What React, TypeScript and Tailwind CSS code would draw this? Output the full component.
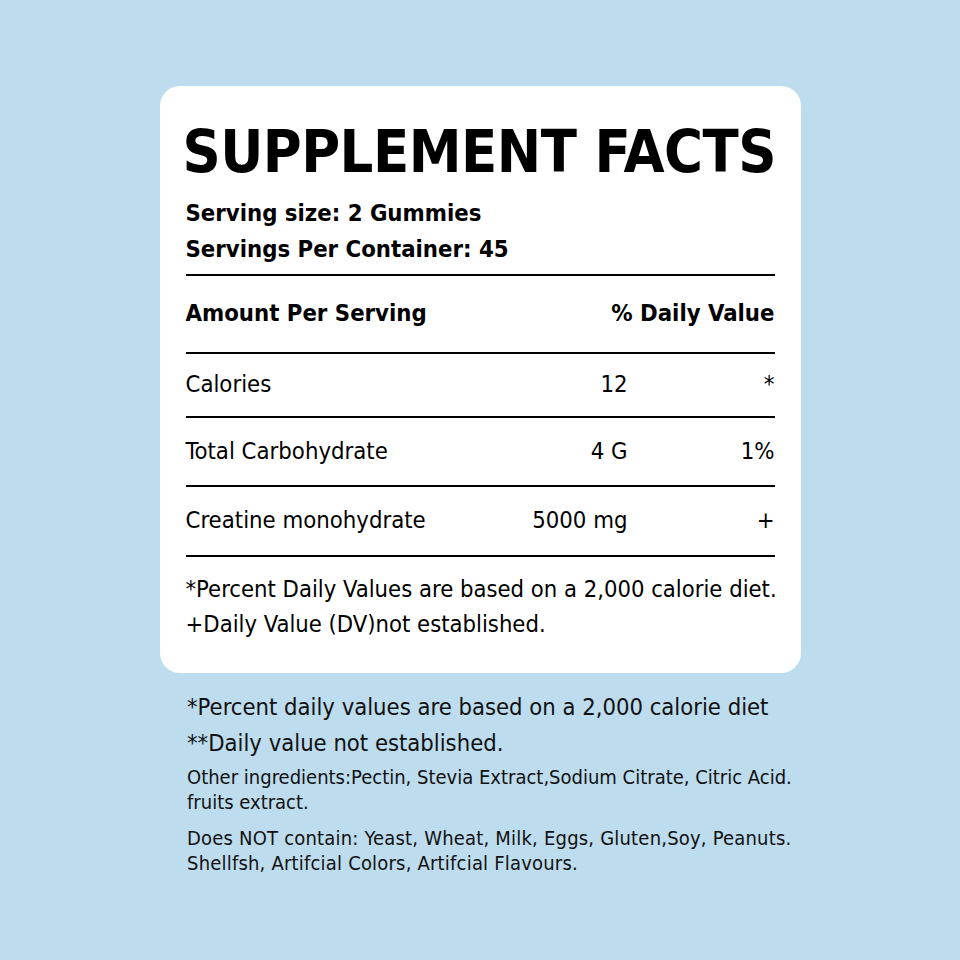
const rows = [
  { name: 'Calories', amount: '12', dv: '*', h: 'h-[64px]' },
  { name: 'Total Carbohydrate', amount: '4 G', dv: '1%', h: 'h-[69px]' },
  { name: 'Creatine monohydrate', amount: '5000 mg', dv: '+', h: 'h-[70px]' },
];

export default function App() {
  return (
    <div
      className="w-[960px] h-[960px] bg-[#bddcee] text-black pt-[86px]"
      style={{ fontFamily: '"DejaVu Sans Condensed", "DejaVu Sans", sans-serif', fontStretch: 'condensed' }}
    >
      <div className="mx-auto w-[641px] h-[587px] rounded-[20px] bg-white px-[26px] pt-[26px]">
        <h1 className="-ml-[3px] text-[59px] leading-[80px] font-bold tracking-[-0.5px] whitespace-nowrap">
          SUPPLEMENT FACTS
        </h1>
        <div className="mt-[3px] text-[23.7px] font-bold leading-[36px]">
          <p>Serving size: 2 Gummies</p>
          <p>Servings Per Container: 45</p>
        </div>
        <div className="mt-[7px] border-t-2 border-black" />
        <div className="flex justify-between h-[78px] items-center text-[23.7px] font-bold border-b-2 border-black">
          <span>Amount Per Serving</span>
          <span>% Daily Value</span>
        </div>
        {rows.map((r) => (
          <div
            key={r.name}
            className={`flex items-center ${r.h} text-[23.7px] border-b-2 border-black`}
          >
            <span className="flex-1">{r.name}</span>
            <span className="w-[140px] text-right">{r.amount}</span>
            <span className="w-[147px] text-right">{r.dv}</span>
          </div>
        ))}
        <div className="pt-[15px] text-[23.6px] leading-[35px] whitespace-nowrap">
          <p>*Percent Daily Values are based on a 2,000 calorie diet.</p>
          <p>+Daily Value (DV)not established.</p>
        </div>
      </div>
      <div className="ml-[187px] mt-[16px] text-[#111] whitespace-nowrap">
        <p className="text-[23.6px] leading-[36px]">*Percent daily values are based on a 2,000 calorie diet</p>
        <p className="text-[23.6px] leading-[36px]">**Daily value not established.</p>
        <p className="mt-[4px] text-[20px] leading-[25px]">
          Other ingredients:Pectin, Stevia Extract,Sodium Citrate, Citric Acid.
          <br />
          fruits extract.
        </p>
        <p className="mt-[11px] text-[20px] leading-[25px] tracking-[0.2px]">
          Does NOT contain: Yeast, Wheat, Milk, Eggs, Gluten,Soy, Peanuts.
          <br />
          Shellfsh, Artifcial Colors, Artifcial Flavours.
        </p>
      </div>
    </div>
  );
}
